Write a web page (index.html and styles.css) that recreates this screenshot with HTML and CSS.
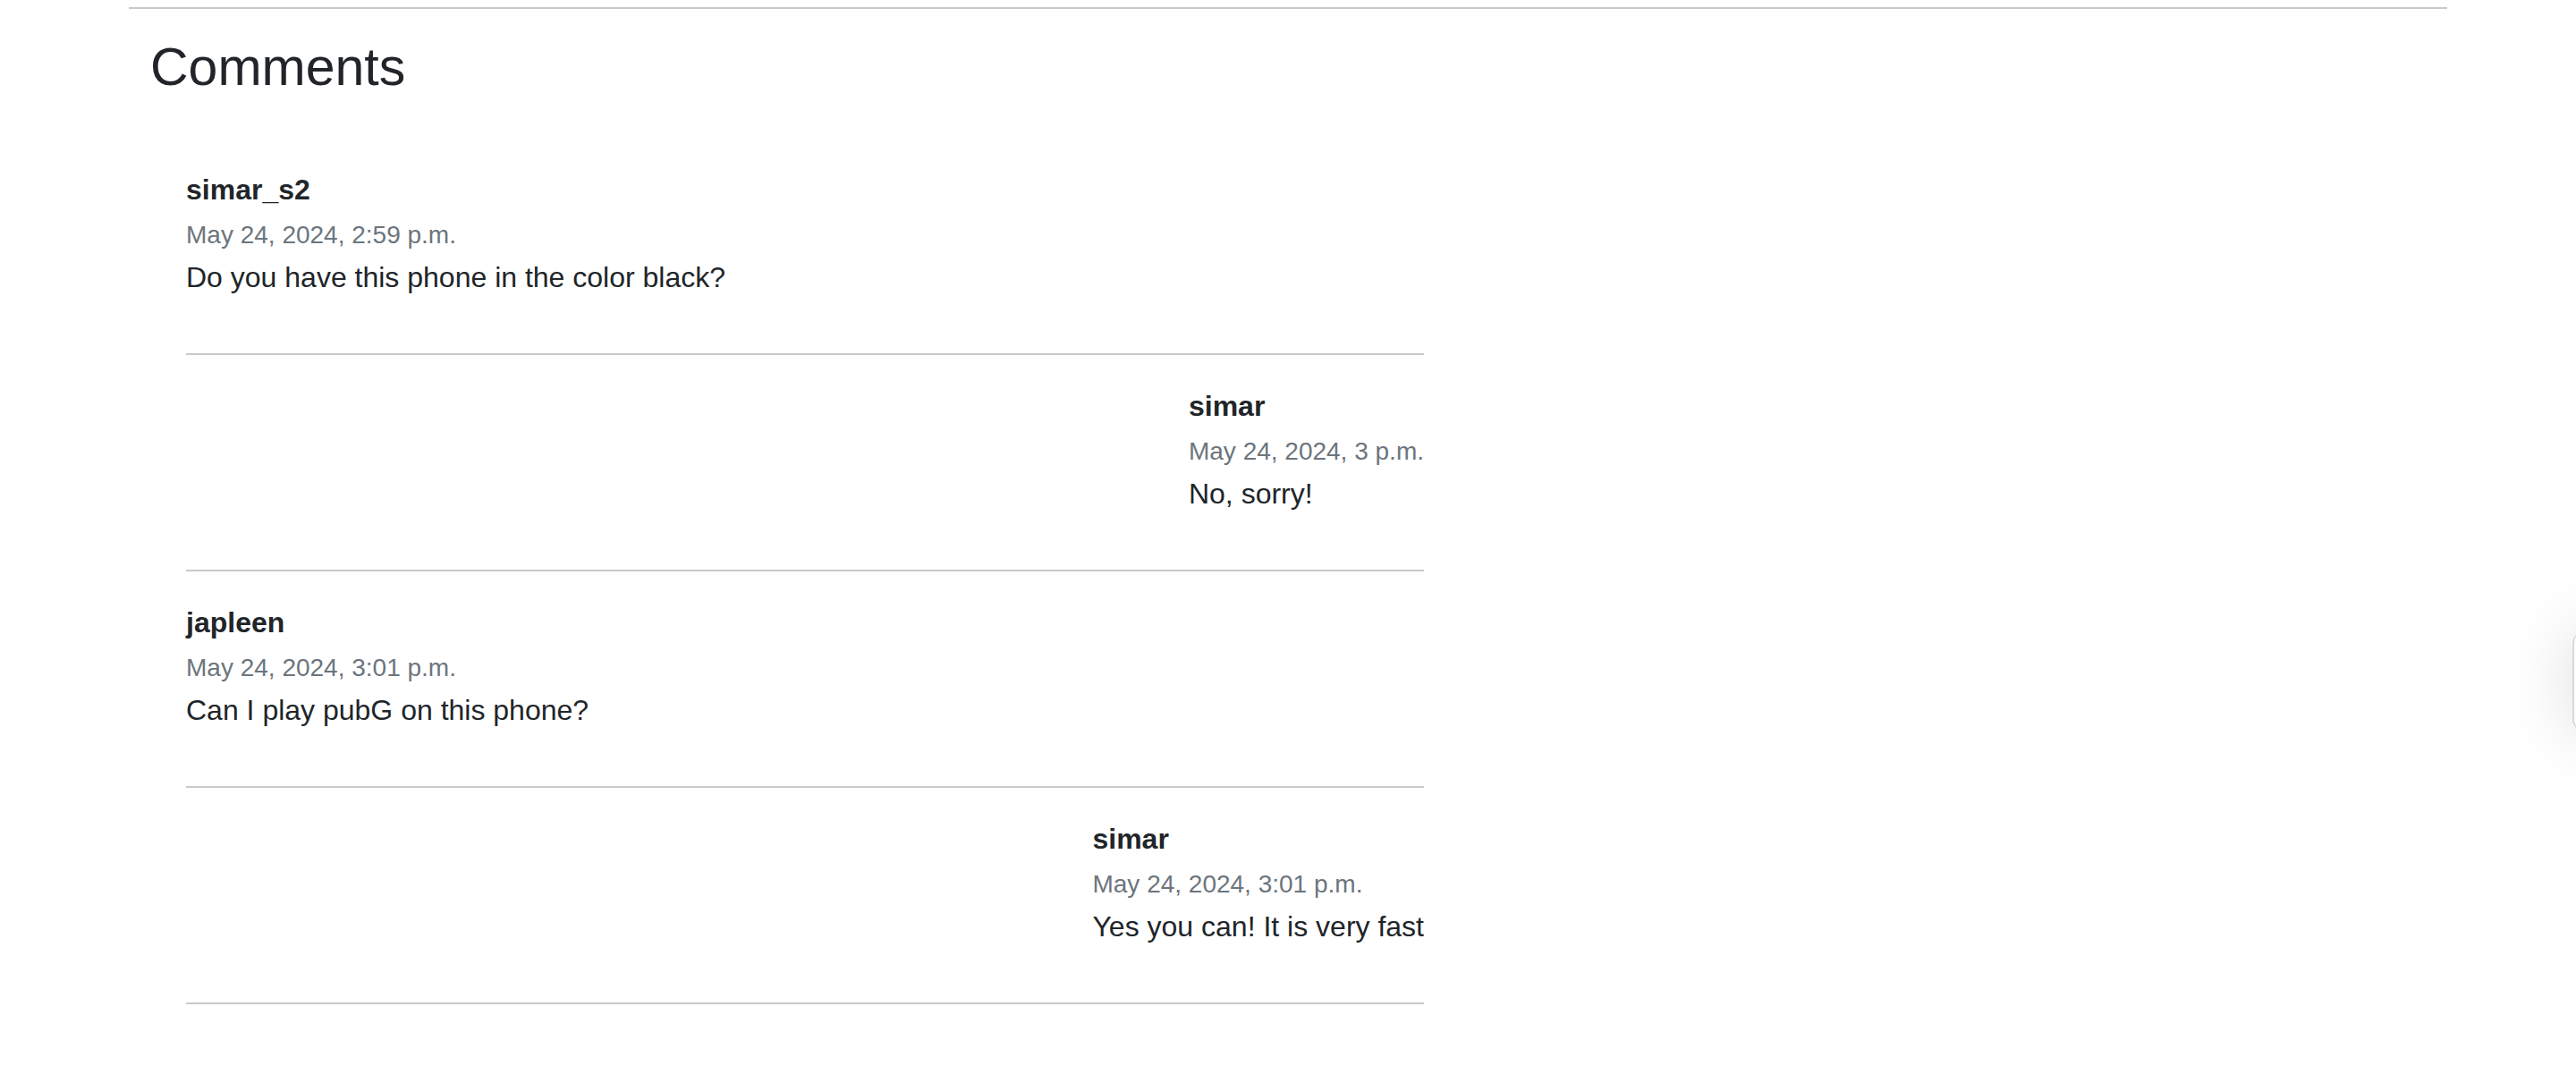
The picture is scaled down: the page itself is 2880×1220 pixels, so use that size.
FILE: index.html
```html
<!DOCTYPE html>
<html lang="en">
<head>
<meta charset="utf-8">
<title>Comments</title>
<link rel="stylesheet" href="styles.css">
</head>
<body>
<div class="container">
  <hr class="divider">
  <h3 class="title">Comments</h3>
  <div class="comments">
    <div class="comment">
      <div class="comment-body">
        <div class="author">simar_s2</div>
        <div class="date">May 24, 2024, 2:59 p.m.</div>
        <p class="text">Do you have this phone in the color black?</p>
      </div>
    </div>
    <div class="comment reply">
      <div class="comment-body">
        <div class="author">simar</div>
        <div class="date">May 24, 2024, 3 p.m.</div>
        <p class="text">No, sorry!</p>
      </div>
    </div>
    <div class="comment">
      <div class="comment-body">
        <div class="author">japleen</div>
        <div class="date">May 24, 2024, 3:01 p.m.</div>
        <p class="text">Can I play pubG on this phone?</p>
      </div>
    </div>
    <div class="comment reply">
      <div class="comment-body">
        <div class="author">simar</div>
        <div class="date">May 24, 2024, 3:01 p.m.</div>
        <p class="text">Yes you can! It is very fast</p>
      </div>
    </div>
  </div>
</div>
<div class="side-widget"></div>
</body>
</html>
```

FILE: styles.css
```css
html, body {
  margin: 0;
  padding: 0;
  background: #ffffff;
}

body {
  font-family: "Liberation Sans", Arial, Helvetica, sans-serif;
  font-size: 32px;
  line-height: 1.5;
  color: #212529;
  overflow: hidden;
}

.container {
  width: 2592px;
  margin: 0 auto;
}

.divider {
  margin: 8px 0 0;
  border: 0;
  border-top: 2px solid #c8c9ca;
  height: 0;
}

.title {
  margin: 30px 0 0;
  padding-left: 24px;
  font-size: 59px;
  line-height: 1.2;
  font-weight: 500;
  color: #212529;
}

.comments {
  margin: 44px 0 0 64px;
  width: 1384px;
}

.comment {
  display: flex;
  flex-direction: column;
  align-items: flex-start;
  padding: 33px 0 29px;
  border-bottom: 2px solid #c8c9ca;
}

.comment.reply {
  align-items: flex-end;
}

.author {
  font-weight: 700;
  font-size: 32px;
  line-height: 48px;
  margin-bottom: 6px;
}

.date {
  font-size: 28px;
  line-height: 42px;
  color: #6c757d;
  margin-bottom: 2px;
}

.text {
  margin: 0 0 32px;
  font-size: 32px;
  line-height: 48px;
}

.side-widget {
  position: fixed;
  top: 706px;
  right: -118px;
  width: 120px;
  height: 112px;
  border-radius: 14px;
  background: #fdfdfd;
  border-left: 2px solid #d9d9d9;
  box-shadow: 0 0 80px rgba(0, 0, 0, 0.14);
}
```
